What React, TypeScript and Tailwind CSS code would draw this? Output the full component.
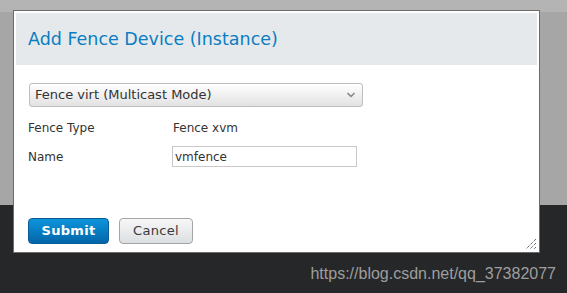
import { ChevronDown } from 'lucide-react';

export default function App() {
    return (
        <div className="relative h-[293px] w-[567px] overflow-hidden bg-[#262729] font-['DejaVu_Sans',sans-serif]">
            {/* page behind the modal */}
            <div className="h-[12px] bg-[#b4b4b4]" />
            <div className="h-[193px] bg-[#a6a6a6]" />

            {/* modal */}
            <div className="absolute left-[13px] top-[10px] flex h-[243px] w-[527px] flex-col border border-[#6b6b6b] bg-white p-[2px]">
                <div className="flex h-[52px] items-center bg-[#e5e9ec] pl-[12px]">
                    <h2 className="text-[17.5px] text-[#0b7dc1]">Add Fence Device (Instance)</h2>
                </div>

                <div className="flex flex-1 flex-col pl-[12px] pt-[18px]">
                    <div className="ml-[1px] flex h-[24px] w-[334px] items-center justify-between rounded-[3px] border border-[#bdbdbd] bg-gradient-to-b from-white to-[#e2e2e2] pl-[5px] pr-[5px] text-[13px] text-[#333]">
                        <span>Fence virt (Multicast Mode)</span>
                        <ChevronDown className="h-[12px] w-[12px] text-[#8a8a8a]" strokeWidth={3.5} />
                    </div>

                    <div className="mt-[14px] flex h-[14px] items-center text-[12px] text-[#333]">
                        <span className="w-[145px]">Fence Type</span>
                        <span>Fence xvm</span>
                    </div>

                    <div className="mt-[11px] flex items-center text-[12px] text-[#333]">
                        <span className="w-[144px]">Name</span>
                        <div className="flex h-[21px] w-[185px] items-center border border-[#c9c9c9] pl-[2px] text-[12px] text-[#333]">
                            vmfence
                        </div>
                    </div>

                    <div className="mt-[51px] flex gap-[10px]">
                        <button className="h-[26px] w-[81px] rounded-[4px] border border-[#0a5c94] bg-gradient-to-b from-[#0d94dc] to-[#0466a8] text-[13px] font-bold tracking-wide text-white">
                            Submit
                        </button>
                        <button className="h-[26px] w-[74px] rounded-[4px] border border-[#a5a5a5] bg-gradient-to-b from-[#f7f7f7] to-[#dcdfe2] text-[13px] tracking-wide text-[#3a3a3a]">
                            Cancel
                        </button>
                    </div>
                </div>

                {/* resize grip */}
                <svg className="absolute bottom-[2px] right-[2px]" width="12" height="12" viewBox="0 0 12 12">
                    <path d="M11 1 L1 11 M11 5 L5 11 M11 9 L9 11" stroke="#333" strokeWidth="1" strokeDasharray="1 1" />
                </svg>
            </div>

            <div className="absolute right-[11px] top-[262px] font-['Liberation_Sans',sans-serif] text-[16px] text-[#9e9e9e]">
                https://blog.csdn.net/qq_37382077
            </div>
        </div>
    );
}
